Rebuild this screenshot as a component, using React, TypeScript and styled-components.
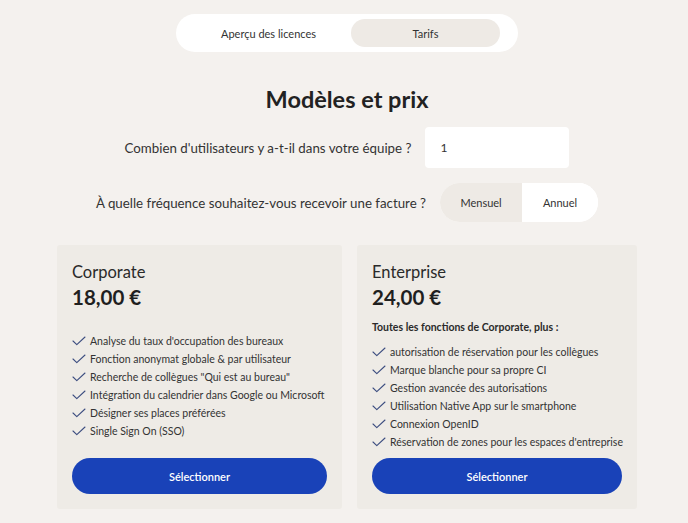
import React, { useState } from "react";
import styled, { createGlobalStyle } from "styled-components";

const Global = createGlobalStyle`
  html, body { margin: 0; padding: 0; background: #f4f1ee; }
  body { font-family: Lato, "Open Sans", sans-serif; color: #2a2a2a; }
  * { box-sizing: border-box; }
`;

const Page = styled.div`
  width: 580px;
  margin-left: 57px;
  padding-top: 14px;
  display: flex;
  flex-direction: column;
  align-items: center;
`;

const TabBar = styled.div`
  display: flex;
  gap: 8px;
  padding: 5px 18px;
  background: #ffffff;
  border-radius: 19px;
  height: 38px;
`;

const Tab = styled.button<{ $active?: boolean }>`
  width: 149px;
  height: 28px;
  border: 0;
  border-radius: 14px;
  background: ${(p) => (p.$active ? "#eeeae5" : "transparent")};
  font-family: inherit;
  font-size: 11px;
  color: #333;
  cursor: pointer;
`;

const Title = styled.h1`
  margin: 32px 0 0;
  font-size: 23.5px;
  font-weight: 700;
  line-height: 30px;
  color: #222;
`;

const Row = styled.div<{ $mt: number }>`
  display: flex;
  align-items: center;
  gap: 14px;
  margin-top: ${(p) => p.$mt}px;
`;

const Label = styled.span`
  font-size: 13.3px;
  color: #333;
`;

const NumberInput = styled.input`
  width: 144px;
  height: 41px;
  border: 0;
  border-radius: 4px;
  background: #fff;
  padding: 0 15px;
  font-family: inherit;
  font-size: 12px;
  color: #333;
  outline: none;
`;

const Toggle = styled.div`
  display: flex;
  height: 39px;
  border-radius: 20px;
  overflow: hidden;
  background: #fff;
`;

const ToggleOption = styled.button<{ $active?: boolean; $w: number }>`
  width: ${(p) => p.$w}px;
  border: 0;
  background: ${(p) => (p.$active ? "#eeeae5" : "#ffffff")};
  font-family: inherit;
  font-size: 11px;
  color: #333;
  cursor: pointer;
`;

const Cards = styled.div`
  display: grid;
  grid-template-columns: 285px 280px;
  gap: 15px;
  margin-top: 23px;
  width: 100%;
`;

const Card = styled.div`
  background: #eeebe6;
  border-radius: 3px;
  padding: 16px 15px 15px;
  height: 264px;
  display: flex;
  flex-direction: column;
`;

const PlanName = styled.div`
  font-size: 16.5px;
  line-height: 22px;
  color: #2a2a2a;
`;

const Price = styled.div`
  font-size: 20.5px;
  font-weight: 700;
  line-height: 28px;
  color: #1f1f1f;
`;

const Intro = styled.div`
  font-size: 10.5px;
  font-weight: 700;
  margin-top: 9px;
  line-height: 14px;
  color: #2a2a2a;
`;

const List = styled.ul<{ $mt: number }>`
  list-style: none;
  margin: ${(p) => p.$mt}px 0 0;
  padding: 0;
  display: flex;
  flex-direction: column;
`;

const Item = styled.li`
  display: flex;
  align-items: center;
  gap: 4px;
  font-size: 10.5px;
  line-height: 18px;
  color: #333;
  white-space: nowrap;
  svg { flex-shrink: 0; }
`;

const Button = styled.button`
  margin-top: auto;
  width: 100%;
  height: 36px;
  border: 0;
  border-radius: 18px;
  background: #1942b8;
  color: #fff;
  font-family: inherit;
  font-size: 11px;
  font-weight: 600;
  cursor: pointer;
`;

const Check = () => (
  <svg width="14" height="10" viewBox="0 0 14 10" fill="none">
    <path d="M1 5 L4.8 8.6 L13 1" stroke="#3c4d80" strokeWidth="1.1" strokeLinecap="round" strokeLinejoin="round" />
  </svg>
);

const corporate = [
  "Analyse du taux d'occupation des bureaux",
  "Fonction anonymat globale & par utilisateur",
  'Recherche de collègues "Qui est au bureau"',
  "Intégration du calendrier dans Google ou Microsoft",
  "Désigner ses places préférées",
  "Single Sign On (SSO)",
];

const enterprise = [
  "autorisation de réservation pour les collègues",
  "Marque blanche pour sa propre CI",
  "Gestion avancée des autorisations",
  "Utilisation Native App sur le smartphone",
  "Connexion OpenID",
  "Réservation de zones pour les espaces d'entreprise",
];

export default function App() {
  const [users, setUsers] = useState("1");
  const [period, setPeriod] = useState<"m" | "a">("m");
  return (
    <>
      <Global />
      <Page>
        <TabBar>
          <Tab>Aperçu des licences</Tab>
          <Tab $active>Tarifs</Tab>
        </TabBar>
        <Title>Modèles et prix</Title>
        <Row $mt={13}>
          <Label>Combien d'utilisateurs y a-t-il dans votre équipe ?</Label>
          <NumberInput value={users} onChange={(e) => setUsers(e.target.value)} />
        </Row>
        <Row $mt={15}>
          <Label>À quelle fréquence souhaitez-vous recevoir une facture ?</Label>
          <Toggle>
            <ToggleOption $w={82} $active={period === "m"} onClick={() => setPeriod("m")}>Mensuel</ToggleOption>
            <ToggleOption $w={76} $active={period === "a"} onClick={() => setPeriod("a")}>Annuel</ToggleOption>
          </Toggle>
        </Row>
        <Cards>
          <Card>
            <PlanName>Corporate</PlanName>
            <Price>18,00 €</Price>
            <List $mt={21}>
              {corporate.map((t) => (
                <Item key={t}><Check />{t}</Item>
              ))}
            </List>
            <Button>Sélectionner</Button>
          </Card>
          <Card>
            <PlanName>Enterprise</PlanName>
            <Price>24,00 €</Price>
            <Intro>Toutes les fonctions de Corporate, plus :</Intro>
            <List $mt={9}>
              {enterprise.map((t) => (
                <Item key={t}><Check />{t}</Item>
              ))}
            </List>
            <Button>Sélectionner</Button>
          </Card>
        </Cards>
      </Page>
    </>
  );
}
